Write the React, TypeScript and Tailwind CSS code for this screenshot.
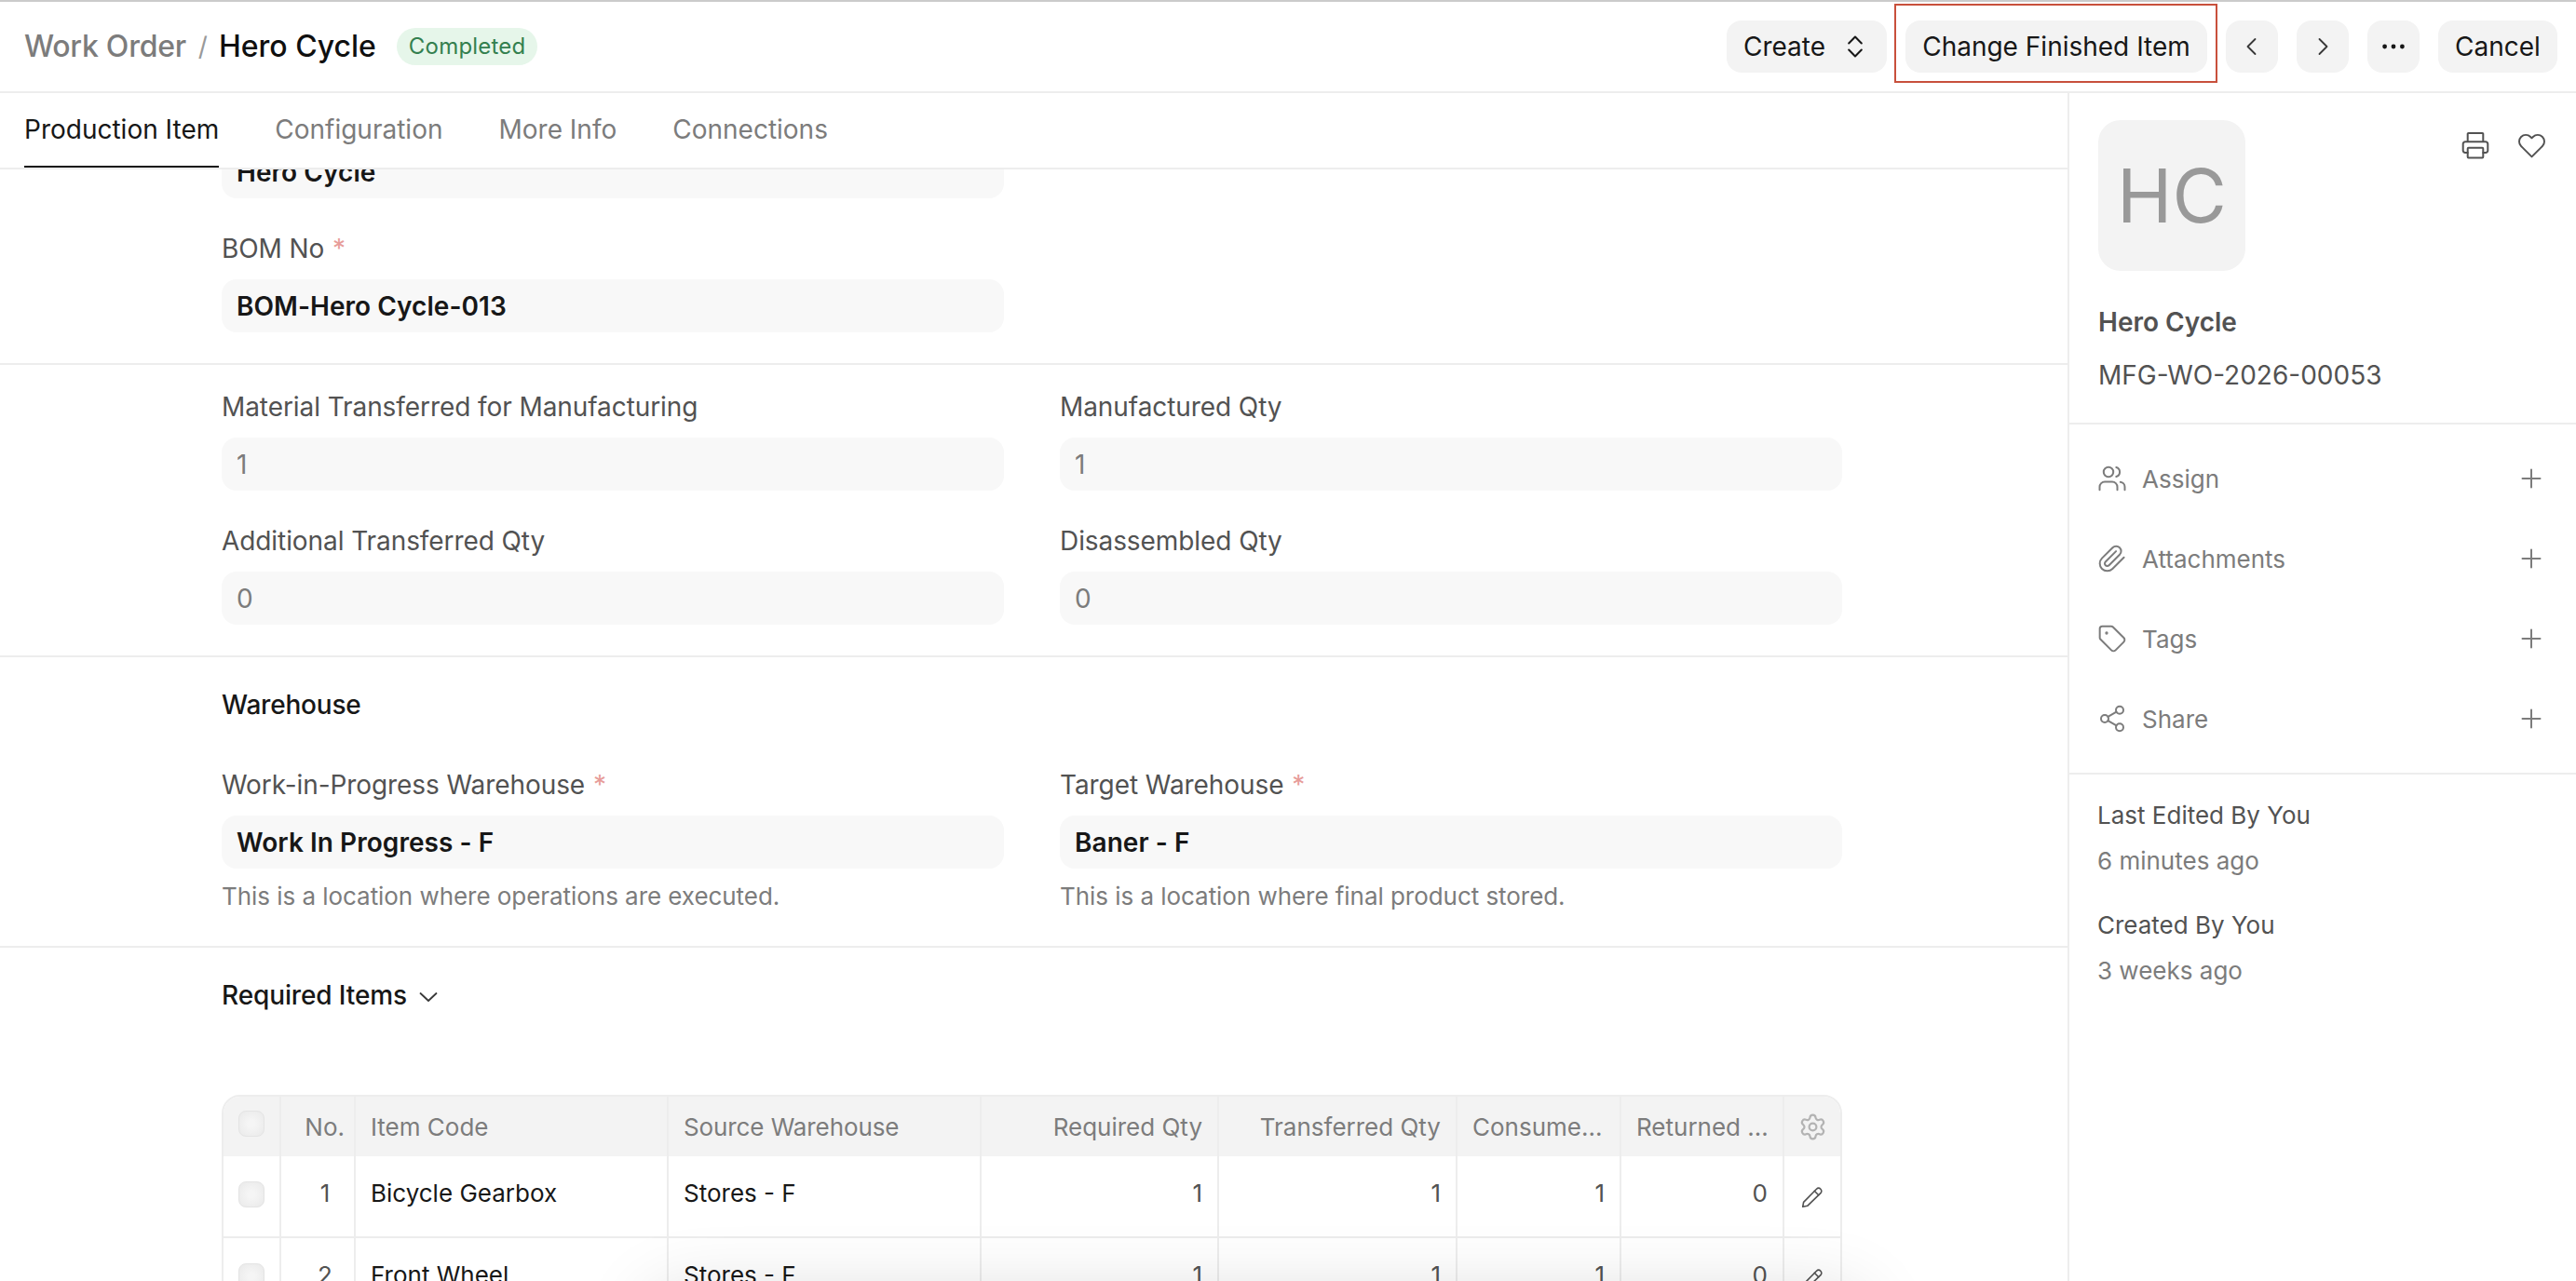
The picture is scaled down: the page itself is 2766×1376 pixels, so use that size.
import type { ReactNode } from 'react';
import { Settings, Share2, Tag } from 'lucide-react';

const tabs = ['Production Item', 'Configuration', 'More Info', 'Connections'];

const tableCols =
  'grid grid-cols-[62px_80px_336px_336px_255px_256px_176px_175px_60px]';

const rows = [
  { no: 1, item: 'Bicycle Gearbox', warehouse: 'Stores - F', required: 1, transferred: 1, consumed: 1, returned: 0 },
  { no: 2, item: 'Front Wheel', warehouse: 'Stores - F', required: 1, transferred: 1, consumed: 1, returned: 0 },
];

const strokeProps = {
  fill: 'none',
  stroke: 'currentColor',
  strokeWidth: 2,
  strokeLinecap: 'round' as const,
  strokeLinejoin: 'round' as const,
};

function PrinterIcon() {
  return (
    <svg className="h-8 w-8" viewBox="0 0 32 32" {...strokeProps}>
      <path d="M7.7 12V3.9a.9.9 0 0 1 .9-.9h14.8a.9.9 0 0 1 .9.9V12" />
      <path d="M7.7 24H5a2.3 2.3 0 0 1-2.3-2.3V14.600A2.300 2.300 0 0 1 5 12.300h22a2.300 2.300 0 0 1 2.300 2.300v7.100A2.300 2.300 0 0 1 27 24h-2.700" />
      <rect x="7.7" y="18.8" width="16.600" height="10.700" rx="0.900" />
    </svg>
  );
}

function HeartIcon() {
  return (
    <svg className="h-[31px] w-[31px]" viewBox="0 0 24 24" {...strokeProps} strokeWidth={1.5}>
      <path d="M20.84 4.61a5.5 5.5 0 0 0-7.78 0L12 5.67l-1.06-1.06a5.5 5.5 0 0 0-7.78 7.78l1.06 1.06L12 21.23l7.78-7.78 1.06-1.06a5.5 5.5 0 0 0 0-7.78z" />
    </svg>
  );
}

function UsersIcon() {
  return (
    <svg className="h-8 w-8" viewBox="0 0 32 32" {...strokeProps}>
      <circle cx="12" cy="9" r="5.2" />
      <path d="M2.5 28.3V25a5.5 5.5 0 0 1 5.5-5.5h8a5.5 5.5 0 0 1 5.5 5.5v3.3" />
      <path d="M20.3 4a5.2 5.2 0 0 1 0 10" />
      <path d="M24.8 19.8a5.3 5.3 0 0 1 4.7 5.2v3.3" />
    </svg>
  );
}

function PaperclipIcon() {
  return (
    <svg className="h-8 w-8" viewBox="0 0 24 24" {...strokeProps} strokeWidth={1.5}>
      <path d="m21.44 11.05-9.19 9.19a6 6 0 0 1-8.49-8.49l8.57-8.57A4 4 0 1 1 18 8.84l-8.59 8.57a2 2 0 0 1-2.83-2.83l8.49-8.48" />
    </svg>
  );
}

function PencilIcon() {
  return (
    <svg className="h-6 w-6" viewBox="0 0 24 24" {...strokeProps} strokeWidth={1.6}>
      <path d="M1.7 22.3l.9-4.9L16.5 3.200a3.100 3.100 0 0 1 4.400 4.400L6.700 21.300z" />
      <path d="M14.300 5.300l4.400 4.400" />
    </svg>
  );
}

function PlusIcon() {
  return (
    <svg className="h-6 w-6" viewBox="0 0 24 24" {...strokeProps}>
      <path d="M12 2.5v19M2.5 12h19" />
    </svg>
  );
}

function Button({ children, className }: { children: ReactNode; className: string }) {
  return (
    <button
      className={`flex h-14 shrink-0 items-center justify-center rounded-2xl bg-[#f3f3f3] text-[28px] text-[#171717] ${className}`}
    >
      {children}
    </button>
  );
}

interface FieldProps {
  label: string;
  value: string;
  required?: boolean;
  bold?: boolean;
  help?: string;
}

function Field({ label, value, required, bold, help }: FieldProps) {
  return (
    <div className="w-[840px]">
      <div className="mb-[13px] text-[28px] leading-10 tracking-[-0.08px] text-[#525252]">
        {label}
        {required && <span className="ml-px text-[#e79c99]"> *</span>}
      </div>
      <FieldValue value={value} bold={bold} />
      {help && <p className="mt-3 text-[26px] leading-9 tracking-[-0.05px] text-[#7c7c7c]">{help}</p>}
    </div>
  );
}

function FieldValue({ value, bold }: { value: string; bold?: boolean }) {
  return (
    <div
      className={`flex h-[57px] items-center rounded-2xl bg-[#f8f8f8] px-4 text-[28px] ${
        bold ? 'font-semibold tracking-[0.05px] text-[#171717]' : 'text-[#7c7c7c]'
      }`}
    >
      {value}
    </div>
  );
}

function Checkbox() {
  return (
    <div className="h-7 w-7 rounded-lg border border-[#e4e4e4] bg-[radial-gradient(circle,#f5f5f5_20%,#e9e9e9_100%)]" />
  );
}

function SidebarAction({ icon, label }: { icon: ReactNode; label: string }) {
  return (
    <div className="flex h-[86px] items-center pr-9 pl-[30px] text-[#7c7c7c]">
      <span className="flex w-8 justify-center">{icon}</span>
      <span className="ml-4 flex-1 text-[26px]">{label}</span>
      <PlusIcon />
    </div>
  );
}

function Header() {
  return (
    <header className="flex h-[100px] shrink-0 items-center border-t-2 border-b-2 border-t-[#cbcbcb] border-b-[#ededed] pr-5 pl-[26px]">
      <div className="flex flex-1 items-center">
        <span className="text-[32px] font-medium tracking-[-0.25px] text-[#7c7c7c]">Work Order</span>
        <span className="mr-3 ml-[13px] text-[28px] text-[#999999]">/</span>
        <span className="text-[32px] font-medium text-[#0f0f0f]">Hero Cycle</span>
        <span className="ml-[22px] flex h-10 items-center rounded-full bg-[#e6f6ea] px-[13px] text-[24px] tracking-[0.2px] text-[#34804f]">
          Completed
        </span>
      </div>
      <div className="flex items-center gap-5">
        <Button className="w-[172px] pr-2">
          Create
          <svg className="ml-6 h-6 w-4" viewBox="0 0 16 24" {...strokeProps}>
            <path d="M1.2 8.5L8 1.5l6.8 7M1.2 15.5l6.8 7 6.8-7" />
          </svg>
        </Button>
        <div className="relative">
          <Button className="w-[324px]">Change Finished Item</Button>
          <div className="absolute -top-[18px] -left-3 h-[85px] w-[347px] border-2 border-[#c8503c]" />
        </div>
        <Button className="w-14">
          <svg className="h-6 w-6 text-[#383838]" viewBox="0 0 24 24" {...strokeProps} strokeWidth={1.8}>
            <path d="M15.5 4L7.5 12l8 8" />
          </svg>
        </Button>
        <Button className="w-14">
          <svg className="h-6 w-6 text-[#383838]" viewBox="0 0 24 24" {...strokeProps} strokeWidth={1.8}>
            <path d="M8.5 4l8 8-8 8" />
          </svg>
        </Button>
        <Button className="w-14">
          <svg className="h-6 w-6" viewBox="0 0 24 24" fill="currentColor">
            <circle cx="2.6" cy="12" r="2.4" />
            <circle cx="12" cy="12" r="2.4" />
            <circle cx="21.4" cy="12" r="2.4" />
          </svg>
        </Button>
        <Button className="w-32">Cancel</Button>
      </div>
    </header>
  );
}

function ItemsTable() {
  const cell = 'flex items-center border-r-2 border-[#ededed]';
  return (
    <div className="mt-[87px] w-[1740px] overflow-hidden rounded-t-[20px] border-2 border-[#ededed] text-[26px]">
      <div className={`${tableCols} h-16 bg-[#f3f3f3] text-[#7c7c7c]`}>
        <div className={`${cell} justify-center pb-1.5`}>
          <Checkbox />
        </div>
        <div className={`${cell} justify-end pr-2.5`}>No.</div>
        <div className={`${cell} pl-4`}>Item Code</div>
        <div className={`${cell} pl-4 tracking-[-0.1px]`}>Source Warehouse</div>
        <div className={`${cell} justify-end pr-4`}>Required Qty</div>
        <div className={`${cell} justify-end pr-4`}>Transferred Qty</div>
        <div className={`${cell} pl-4`}>Consume...</div>
        <div className={`${cell} pl-4`}>Returned ...</div>
        <div className="flex items-center justify-center text-[#b3b3b3]">
          <Settings size={31} strokeWidth={1.7} />
        </div>
      </div>
      {rows.map((row) => (
        <div key={row.no} className={`${tableCols} h-[88px] border-b-2 border-[#ededed] text-[#525252]`}>
          <div className={`${cell} justify-center pb-1`}>
            <Checkbox />
          </div>
          <div className={`${cell} justify-center pb-[7px] pl-4`}>{row.no}</div>
          <div className={`${cell} pb-[7px] pl-4 text-[#171717]`}>{row.item}</div>
          <div className={`${cell} pb-[7px] pl-4 text-[#171717]`}>{row.warehouse}</div>
          <div className={`${cell} justify-end pr-4 pb-[7px]`}>{row.required}</div>
          <div className={`${cell} justify-end pr-4 pb-[7px]`}>{row.transferred}</div>
          <div className={`${cell} justify-end pr-4 pb-[7px]`}>{row.consumed}</div>
          <div className={`${cell} justify-end pr-4 pb-[7px]`}>{row.returned}</div>
          <div className="flex items-center justify-center pt-0.5">
            <PencilIcon />
          </div>
        </div>
      ))}
    </div>
  );
}

function Sidebar() {
  return (
    <aside className="w-[546px] shrink-0 border-l-2 border-[#ededed]">
      <div className="h-[356px] border-b-2 border-[#ededed] pt-[29px] pl-[31px]">
        <div className="flex items-start justify-between pr-8">
          <div className="flex h-[162px] w-[158px] items-center justify-center rounded-[24px] bg-[#f3f3f3] text-[80px] text-[#999999]">
            HC
          </div>
          <div className="flex items-center gap-[29px] pt-[11px] text-[#525252]">
            <PrinterIcon />
            <HeartIcon />
          </div>
        </div>
        <div className="mt-[35px] text-[28px] leading-10 font-semibold text-[#525252]">Hero Cycle</div>
        <div className="mt-[17px] text-[28px] leading-10 text-[#525252]">MFG-WO-2026-00053</div>
      </div>
      <div className="h-[376px] border-b-2 border-[#ededed] pt-[15px]">
        <SidebarAction icon={<UsersIcon />} label="Assign" />
        <SidebarAction icon={<PaperclipIcon />} label="Attachments" />
        <SidebarAction icon={<Tag size={32} strokeWidth={1.5} />} label="Tags" />
        <SidebarAction icon={<Share2 size={32} strokeWidth={1.5} />} label="Share" />
      </div>
      <div className="pt-[26px] pl-[30px] text-[26px] leading-9">
        <div className="text-[#525252]">Last Edited By You</div>
        <div className="mt-[13px] text-[#7c7c7c]">6 minutes ago</div>
        <div className="mt-[33px] text-[#525252]">Created By You</div>
        <div className="mt-[13px] text-[#7c7c7c]">3 weeks ago</div>
      </div>
    </aside>
  );
}

export default function App() {
  const section = 'border-b-2 border-[#ededed] pl-[238px]';

  return (
    <div className="relative flex h-[1376px] w-[2766px] flex-col overflow-hidden bg-white font-[Inter,sans-serif]">
      <Header />
      <div className="flex min-h-0 flex-1">
        <div className="flex w-[2220px] shrink-0 flex-col">
          <nav className="flex h-[82px] shrink-0 gap-[60px] border-b-2 border-[#ededed] pl-[26px] text-[28px]">
            {tabs.map((tab, i) => (
              <button
                key={tab}
                className={`border-b-2 ${
                  i === 0 ? 'border-[#171717] text-[#171717]' : 'border-transparent text-[#7c7c7c]'
                }`}
              >
                {tab}
              </button>
            ))}
          </nav>

          <main className="min-h-0 flex-1 overflow-hidden">
            {/* the form is scrolled, so its first field sits partly under the tabs */}
            <section className={`${section} pb-[33px]`}>
              <div className="-mt-[26px] mb-[34px] w-[840px]">
                <FieldValue value="Hero Cycle" bold />
              </div>
              <Field label="BOM No" value="BOM-Hero Cycle-013" required bold />
            </section>

            <section className={`${section} grid grid-cols-[840px_840px] gap-x-[60px] gap-y-[34px] pt-[25px] pb-[33px]`}>
              <Field label="Material Transferred for Manufacturing" value="1" />
              <Field label="Manufactured Qty" value="1" />
              <Field label="Additional Transferred Qty" value="0" />
              <Field label="Disassembled Qty" value="0" />
            </section>

            <section className={`${section} pt-[31px] pb-[35px]`}>
              <h2 className="mb-[46px] text-[28px] leading-10 font-medium tracking-[-0.2px] text-[#171717]">
                Warehouse
              </h2>
              <div className="flex gap-[60px]">
                <Field
                  label="Work-in-Progress Warehouse"
                  value="Work In Progress - F"
                  help="This is a location where operations are executed."
                  required
                  bold
                />
                <Field
                  label="Target Warehouse"
                  value="Baner - F"
                  help="This is a location where final product stored."
                  required
                  bold
                />
              </div>
            </section>

            <section className="pt-[31px] pl-[238px]">
              <h2 className="flex items-center text-[28px] leading-10 font-medium tracking-[-0.12px] text-[#171717]">
                Required Items
                <svg className="mt-1 ml-[13px] h-3 w-5 text-[#383838]" viewBox="0 0 20 12" {...strokeProps} strokeWidth={1.8}>
                  <path d="M1.5 2L10 10l8.5-8" />
                </svg>
              </h2>
              <ItemsTable />
            </section>
          </main>
        </div>
        <Sidebar />
      </div>

      {/* shadow of the floating bar parked just under the fold */}
      <div className="absolute top-[1392px] left-[700px] h-20 w-[1300px] rounded-[24px] shadow-[0_0_80px_rgba(0,0,0,0.16)]" />
    </div>
  );
}
